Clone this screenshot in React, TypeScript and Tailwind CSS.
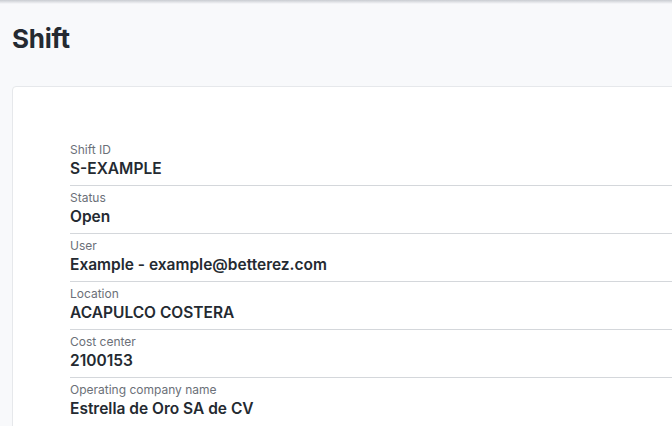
import React from "react";

const rows = [
  { label: "Shift ID", value: "S-EXAMPLE" },
  { label: "Status", value: "Open" },
  { label: "User", value: "Example - example@betterez.com" },
  { label: "Location", value: "ACAPULCO COSTERA" },
  { label: "Cost center", value: "2100153" },
  { label: "Operating company name", value: "Estrella de Oro SA de CV" },
];

export default function App() {
  return (
    <div
      className="relative h-screen overflow-hidden bg-[#f8f9fb] text-[#242a31]"
      style={{ fontFamily: "Inter, 'Noto Sans', sans-serif" }}
    >
      <div className="absolute inset-x-0 top-0 h-[4px] bg-gradient-to-b from-[#c9ccd1] to-[#f8f9fb]" />
      <div className="pl-3 pt-[23px]">
        <h1 className="text-[26px] font-bold leading-8 tracking-[-0.01em]">Shift</h1>
        <div className="-mr-4 mt-[31px] rounded-[4px] border border-[#e6e8eb] bg-white pb-10 pl-[57px] pt-[51px]">
          {rows.map((row, i) => (
            <div
              key={row.label}
              className={`pb-[5px] pt-[4px] ${i < rows.length - 1 ? "border-b border-[#d4d7db]" : ""}`}
            >
              <div className="text-[12px] leading-4 text-[#6b7078]">{row.label}</div>
              <div className="text-[15.5px] font-semibold leading-[22px]">{row.value}</div>
            </div>
          ))}
        </div>
      </div>
    </div>
  );
}
